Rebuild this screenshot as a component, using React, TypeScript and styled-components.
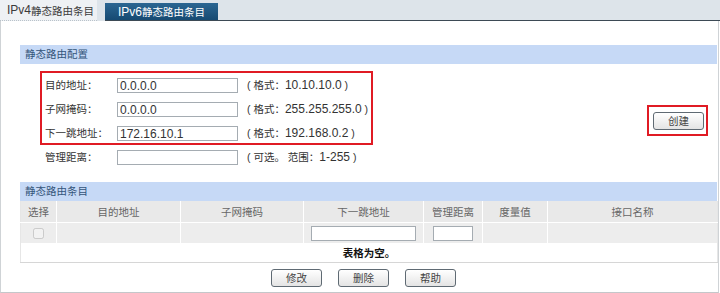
import React from "react";
import styled, { createGlobalStyle } from "styled-components";

const GlobalStyle = createGlobalStyle`
  html, body {
    margin: 0;
    padding: 0;
    background: #ffffff;
  }
  body {
    font-family: "Liberation Sans", "Noto Sans CJK SC", sans-serif;
    font-size: 10.5px;
    color: #333;
  }
`;

const formRows = [
  { label: "目的地址：", value: "0.0.0.0", format: "10.10.10.0" },
  { label: "子网掩码：", value: "0.0.0.0", format: "255.255.255.0" },
  { label: "下一跳地址：", value: "172.16.10.1", format: "192.168.0.2" },
];

const columns = [
  { title: "选择", width: 36 },
  { title: "目的地址", width: 124 },
  { title: "子网掩码", width: 123 },
  { title: "下一跳地址", width: 120 },
  { title: "管理距离", width: 59 },
  { title: "度量值", width: 65 },
  { title: "接口名称", width: 170 },
];

const App: React.FC = () => {
  return (
    <Page>
      <GlobalStyle />
      <TabBar>
        <Tab>
          <Latin>IPv4</Latin>静态路由条目
        </Tab>
        <Tab active>
          <Latin>IPv6</Latin>静态路由条目
        </Tab>
        <TabFill />
      </TabBar>

      <Panel>
        <SectionBand>静态路由配置</SectionBand>

        <ConfigArea>
          <FormRows>
            <Highlight>
              {formRows.map((row) => (
                <FormRow key={row.label}>
                  <Label>{row.label}</Label>
                  <TextInput defaultValue={row.value} />
                  <Hint>
                    ( 格式：<Latin>{row.format}</Latin> )
                  </Hint>
                </FormRow>
              ))}
            </Highlight>
            <FormRow indent>
              <Label>管理距离：</Label>
              <TextInput defaultValue="" />
              <Hint>
                ( 可选。 范围：<Latin>1-255</Latin> )
              </Hint>
            </FormRow>
          </FormRows>

          <ButtonHighlight>
            <Button>创建</Button>
          </ButtonHighlight>
        </ConfigArea>

        <SectionBand>静态路由条目</SectionBand>
        <Table>
          <colgroup>
            {columns.map((c) => (
              <col key={c.title} style={{ width: c.width }} />
            ))}
          </colgroup>
          <thead>
            <tr>
              {columns.map((c) => (
                <HeadCell key={c.title}>{c.title}</HeadCell>
              ))}
            </tr>
          </thead>
          <tbody>
            <tr>
              <BodyCell>
                <CheckBox type="checkbox" disabled />
              </BodyCell>
              <BodyCell />
              <BodyCell />
              <BodyCell>
                <CellInput width={105} />
              </BodyCell>
              <BodyCell>
                <CellInput width={40} />
              </BodyCell>
              <BodyCell />
              <BodyCell />
            </tr>
            <tr>
              <EmptyCell colSpan={7}>表格为空。</EmptyCell>
            </tr>
          </tbody>
        </Table>

        <ActionBar>
          <Button>修改</Button>
          <Button>删除</Button>
          <Button>帮助</Button>
        </ActionBar>
      </Panel>
    </Page>
  );
};

export default App;

const Page = styled.div`
  width: 720px;
  height: 293px;
  overflow: hidden;
`;

const Latin = styled.span`
  font-family: "Liberation Sans", Arial, sans-serif;
  font-size: 12px;
`;

const TabBar = styled.div`
  display: flex;
  height: 21px;
  background: #dde4ea;
`;

const Tab = styled.div<{ active?: boolean }>`
  display: flex;
  align-items: center;
  flex-shrink: 0;
  box-sizing: border-box;
  height: 21px;
  white-space: nowrap;
  ${({ active }) =>
    active
      ? `
    width: 113px;
    margin: 3px 0 0 8px;
    height: 18px;
    justify-content: center;
    color: #ffffff;
    background: linear-gradient(#2b6692, #164a72);
    border-bottom: 1px solid #3d4a55;
  `
      : `
    width: 97px;
    padding-left: 7px;
    color: #3b3b3b;
    background: #eef1f4;
    border-bottom: 1px dotted #b9c2ca;
  `}
`;

const TabFill = styled.div`
  flex: 1;
  border-bottom: 1px solid #3d4a55;
`;

const Panel = styled.div`
  box-sizing: border-box;
  width: 719px;
  height: 272px;
  padding: 24px 1px 0 19px;
  border-left: 1px solid #cfd3d6;
  border-right: 1px solid #cfd3d6;
  border-bottom: 1px solid #c4c7ca;
`;

const SectionBand = styled.div`
  height: 19px;
  line-height: 19px;
  padding-left: 5px;
  background: #c6d9f6;
  color: #34557a;
`;

const ConfigArea = styled.div`
  display: flex;
  align-items: center;
  justify-content: space-between;
  padding: 7px 9px 13px 20px;
`;

const FormRows = styled.div`
  display: flex;
  flex-direction: column;
`;

const Highlight = styled.div`
  width: 333px;
  box-sizing: border-box;
  border: 2px solid #e01b24;
  padding-left: 3px;

  & > div:last-child {
    height: 22px;
  }
`;

const FormRow = styled.div<{ indent?: boolean }>`
  display: flex;
  align-items: flex-start;
  height: 24px;
  box-sizing: border-box;
  padding-top: 5px;
  padding-left: ${({ indent }) => (indent ? "5px" : "0")};
  white-space: nowrap;
`;

const Label = styled.span`
  flex-shrink: 0;
  width: 72px;
  line-height: 15px;
  color: #333;
`;

const TextInput = styled.input`
  flex-shrink: 0;
  box-sizing: border-box;
  width: 121px;
  height: 15px;
  margin: 0;
  padding: 0 2px;
  border: 1px solid #a5acb2;
  font-family: "Liberation Sans", sans-serif;
  font-size: 12px;
  color: #333;
  outline: none;
`;

const Hint = styled.span`
  flex-shrink: 0;
  margin-left: 9px;
  line-height: 15px;
  color: #333;
  white-space: nowrap;
`;

const ButtonHighlight = styled.div`
  border: 2px solid #e01b24;
  padding: 5px 2px 4px 4px;
  display: flex;
`;

const Button = styled.button`
  box-sizing: border-box;
  width: 51px;
  height: 18px;
  margin: 0;
  padding: 0;
  border: 1px solid #5f6a73;
  border-radius: 3px;
  background: linear-gradient(#ffffff, #e4e4e4);
  font-family: "Liberation Sans", "Noto Sans CJK SC", sans-serif;
  font-size: 10.5px;
  line-height: 16px;
  color: #444;
`;

const Table = styled.table`
  width: 697px;
  table-layout: fixed;
  border-collapse: collapse;
  border-bottom: 1px solid #d6d6d6;
  border-left: 1px solid #e6e6e6;
  border-right: 1px solid #e6e6e6;
`;

const HeadCell = styled.th`
  height: 21px;
  padding: 0;
  background: #e9e9e9;
  border-right: 1px solid #ffffff;
  border-bottom: 1px solid #ffffff;
  font-weight: normal;
  color: #666;
  text-align: center;
  &:last-child {
    border-right: none;
  }
`;

const BodyCell = styled.td`
  height: 20px;
  padding: 0;
  background: #ededed;
  border-right: 1px solid #ffffff;
  text-align: center;
  vertical-align: middle;
  &:last-child {
    border-right: none;
  }
`;

const CheckBox = styled.input`
  width: 11px;
  height: 11px;
  margin: 0;
  vertical-align: middle;
`;

const CellInput = styled.input<{ width: number }>`
  box-sizing: border-box;
  display: block;
  margin: 0 auto;
  width: ${({ width }) => width}px;
  height: 15px;
  padding: 0;
  border: 1px solid #a5acb2;
  background: #ffffff;
`;

const EmptyCell = styled.td`
  height: 19px;
  padding: 0;
  background: #ffffff;
  text-align: center;
  font-weight: bold;
  color: #111;
`;

const ActionBar = styled.div`
  display: flex;
  justify-content: center;
  gap: 16px;
  padding: 6px 10px 0 0;
`;
